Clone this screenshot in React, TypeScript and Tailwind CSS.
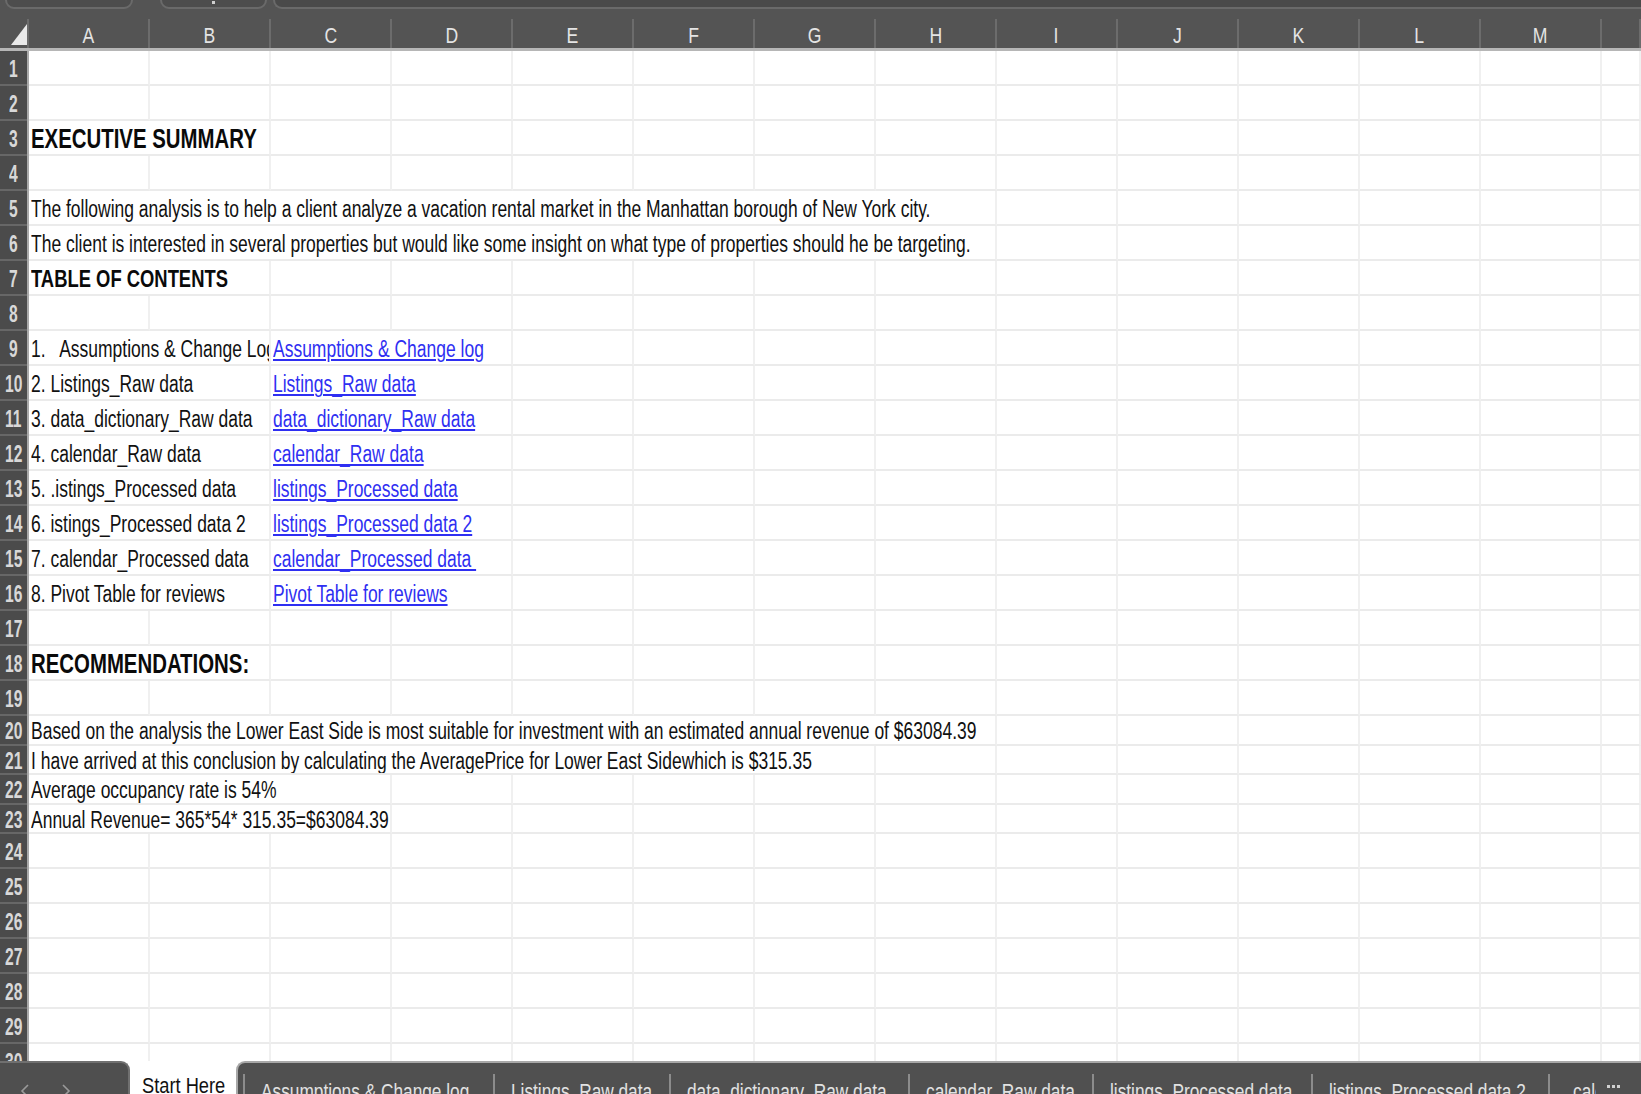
import React from "react";

type Cell = { span: number; content?: React.ReactNode };
type RowDef = { n: number; h: "a" | "b"; cells: Cell[] };

const COLS = ["A", "B", "C", "D", "E", "F", "G", "H", "I", "J", "K", "L", "M", "N"];

const SPAN: Record<number, string> = {
  1: "col-span-1",
  2: "col-span-2",
  3: "col-span-3",
  7: "col-span-7",
  8: "col-span-8",
};

function Tx({ children }: { children: React.ReactNode }) {
  return (
    <span className="inline-block origin-left whitespace-pre text-[23px] leading-none text-[#111111] scale-x-[0.76]">
      {children}
    </span>
  );
}

function Bd({ children }: { children: React.ReactNode }) {
  return (
    <span className="inline-block origin-left whitespace-pre text-[23px] font-bold leading-none text-[#0a0a0a] scale-x-[0.8]">
      {children}
    </span>
  );
}

function Hd({ children }: { children: React.ReactNode }) {
  return (
    <span className="inline-block origin-left whitespace-pre text-[27px] font-bold leading-none text-[#0a0a0a] scale-x-[0.755]">
      {children}
    </span>
  );
}

function Ln({ children }: { children: React.ReactNode }) {
  return (
    <span className="inline-block origin-left whitespace-pre text-[23px] leading-none text-[#2f2ff2] underline decoration-[1.5px] underline-offset-[2px] scale-x-[0.76]">
      {children}
    </span>
  );
}

const toc: [string, string][] = [
  ["1.   Assumptions & Change Log", "Assumptions & Change log"],
  ["2. Listings_Raw data", "Listings_Raw data"],
  ["3. data_dictionary_Raw data", "data_dictionary_Raw data"],
  ["4. calendar_Raw data", "calendar_Raw data"],
  ["5. .istings_Processed data", "listings_Processed data"],
  ["6. istings_Processed data 2", "listings_Processed data 2"],
  ["7. calendar_Processed data", "calendar_Processed data "],
  ["8. Pivot Table for reviews", "Pivot Table for reviews"],
];

const rows: RowDef[] = [];
for (let i = 1; i <= 30; i++) {
  const h: "a" | "b" = i >= 20 && i <= 23 ? "b" : "a";
  let cells: Cell[] = [];
  if (i === 3) cells = [{ span: 2, content: <Hd>EXECUTIVE SUMMARY</Hd> }];
  if (i === 5)
    cells = [
      {
        span: 8,
        content: (
          <Tx>
            The following analysis is to help a client analyze a vacation rental market in the Manhattan borough of New
            York city.
          </Tx>
        ),
      },
    ];
  if (i === 6)
    cells = [
      {
        span: 8,
        content: (
          <Tx>
            The client is interested in several properties but would like some insight on what type of properties should
            he be targeting.
          </Tx>
        ),
      },
    ];
  if (i === 7) cells = [{ span: 2, content: <Bd>TABLE OF CONTENTS</Bd> }];
  if (i >= 9 && i <= 16) {
    const [a, b] = toc[i - 9];
    cells = [
      { span: 2, content: <Tx>{a}</Tx> },
      { span: 2, content: <Ln>{b}</Ln> },
    ];
  }
  if (i === 18) cells = [{ span: 2, content: <Hd>RECOMMENDATIONS:</Hd> }];
  if (i === 20)
    cells = [
      {
        span: 8,
        content: (
          <Tx>
            Based on the analysis the Lower East Side is most suitable for investment with an estimated annual revenue of
            $63084.39
          </Tx>
        ),
      },
    ];
  if (i === 21)
    cells = [
      {
        span: 7,
        content: <Tx>I have arrived at this conclusion by calculating the AveragePrice for Lower East Sidewhich is $315.35</Tx>,
      },
    ];
  if (i === 22) cells = [{ span: 3, content: <Tx>Average occupancy rate is 54%</Tx> }];
  if (i === 23) cells = [{ span: 3, content: <Tx>Annual Revenue= 365*54* 315.35=$63084.39</Tx> }];
  rows.push({ n: i, h, cells });
}

function SheetRow({ r }: { r: RowDef }) {
  const used = r.cells.reduce((s, c) => s + c.span, 0);
  const rest = Array.from({ length: 14 - used });
  return (
    <div className={`flex shrink-0 ${r.h === "a" ? "h-[35px]" : "h-[29.5px]"}`}>
      <div className="w-[27px] shrink-0 bg-[#4b4b4b] border-b-2 border-[#676767] flex items-center justify-center pt-[4px]">
        <span className="inline-block origin-center text-[23px] font-bold leading-none text-[#d8d8d8] scale-x-[0.68]">
          {r.n}
        </span>
      </div>
      <div className="w-[2px] shrink-0 bg-[#a9a9a9]" />
      <div className="flex-1 grid grid-cols-[repeat(13,121px)_1fr]">
        {r.cells.map((c, k) => (
          <div
            key={k}
            className={`${SPAN[c.span]} border-r-2 border-b-2 border-r-[#f0f0f0] border-b-[#ebebeb] flex items-center overflow-hidden pl-[2px] pt-[4px]`}
          >
            {c.content}
          </div>
        ))}
        {rest.map((_, k) => (
          <div key={"e" + k} className="col-span-1 border-r-2 border-b-2 border-r-[#f0f0f0] border-b-[#ebebeb]" />
        ))}
      </div>
    </div>
  );
}

function TabText({ children }: { children: React.ReactNode }) {
  return (
    <span className="inline-block origin-left whitespace-pre text-[22px] leading-none text-[#e2e2e2] scale-x-[0.785]">
      {children}
    </span>
  );
}

const tabs: [string, string][] = [
  ["Assumptions & Change log", "w-[248px]"],
  ["Listings_Raw data", "w-[174px]"],
  ["data_dictionary_Raw data", "w-[237px]"],
  ["calendar_Raw data", "w-[182px]"],
  ["listings_Processed data", "w-[217px]"],
  ["listings_Processed data 2", "w-[235px]"],
];

export default function App() {
  return (
    <div className="w-[1641px] h-[1094px] overflow-hidden bg-white flex flex-col font-['Liberation_Sans',Arial,sans-serif]">
      {/* top strip: bottoms of name box / formula bar */}
      <div className="h-[10px] shrink-0 bg-[#545454] flex items-end overflow-hidden pb-[1px]">
        <div className="ml-[5px] w-[128px] h-[30px] shrink-0 rounded-b-[9px] border-2 border-[#6a6a6a] bg-[#4d4d4d]" />
        <div className="ml-[27px] w-[107px] h-[30px] shrink-0 rounded-b-[9px] border-2 border-[#6a6a6a] bg-[#4d4d4d] flex justify-center">
          <div className="mt-[20px] w-[3px] h-[3px] bg-[#cfcfcf]" />
        </div>
        <div className="ml-[6px] flex-1 h-[30px] rounded-bl-[9px] border-2 border-r-0 border-[#6a6a6a] bg-[#4a4a4a]" />
      </div>

      {/* column header */}
      <div className="h-[38px] shrink-0 bg-[#545454] flex items-end">
        <div className="w-[27px] h-[29px] shrink-0 flex items-end justify-end pb-[3px]">
          <svg width="16" height="21" viewBox="0 0 16 21">
            <polygon points="0,21 16,21 16,0" fill="#e9e9e9" />
          </svg>
        </div>
        <div className="w-[2px] h-[29px] shrink-0 bg-[#6c6c6c]" />
        <div className="flex-1 grid grid-cols-[repeat(13,121px)_1fr] h-[29px]">
          {COLS.map((c) => (
            <div key={c} className="border-r-2 border-[#6c6c6c] flex items-end justify-center pb-[1px]">
              <span className="inline-block origin-center text-[22px] leading-none text-[#e4e4e4] scale-x-[0.8]">
                {c === "N" ? "" : c}
              </span>
            </div>
          ))}
        </div>
      </div>
      <div className="h-[3px] shrink-0 bg-[#b6b6b6]" />

      {/* sheet */}
      <div className="h-[1010px] shrink-0 overflow-hidden flex flex-col">
        {rows.map((r) => (
          <SheetRow key={r.n} r={r} />
        ))}
      </div>

      {/* sheet tabs */}
      <div className="h-[33px] shrink-0 flex">
        <div className="w-[130px] shrink-0 bg-[#4f4f4f] rounded-tr-[9px] border-t-2 border-r-2 border-[#707070] flex items-start pt-[21px]">
          <svg className="ml-[20px]" width="10" height="14" viewBox="0 0 10 14">
            <polyline points="8,1 2,7 8,13" fill="none" stroke="#9a9a9a" strokeWidth="1.6" />
          </svg>
          <svg className="ml-[31px]" width="10" height="14" viewBox="0 0 10 14">
            <polyline points="2,1 8,7 2,13" fill="none" stroke="#9a9a9a" strokeWidth="1.6" />
          </svg>
        </div>
        <div className="w-[106px] shrink-0 bg-white pl-[12px] pt-[14px] overflow-hidden">
          <span className="inline-block origin-left whitespace-pre text-[22px] leading-none text-[#111111] scale-x-[0.83]">
            Start Here
          </span>
        </div>
        <div className="flex-1 bg-[#505050] rounded-tl-[9px] border-t-2 border-l-2 border-[#a8a8a8] flex overflow-hidden">
          <div className="w-[5px] shrink-0" />
          {tabs.map(([t, w]) => (
            <div key={t} className="flex shrink-0">
              <div className="w-[2px] h-[20px] mt-[11px] bg-[#8c8c8c]" />
              <div className={`${w} pl-[16px] pt-[18px] overflow-hidden`}>
                <TabText>{t}</TabText>
              </div>
            </div>
          ))}
          <div className="flex shrink-0">
            <div className="w-[2px] h-[20px] mt-[11px] bg-[#8c8c8c]" />
            <div className="w-[46px] pl-[23px] pt-[18px] overflow-hidden">
              <TabText>calendar_Processed data</TabText>
            </div>
            <div className="flex gap-[2px] pt-[22px] ml-[11px]">
              <div className="w-[3px] h-[3px] bg-[#d0d0d0]" />
              <div className="w-[3px] h-[3px] bg-[#d0d0d0]" />
              <div className="w-[3px] h-[3px] bg-[#d0d0d0]" />
            </div>
          </div>
        </div>
      </div>
    </div>
  );
}
